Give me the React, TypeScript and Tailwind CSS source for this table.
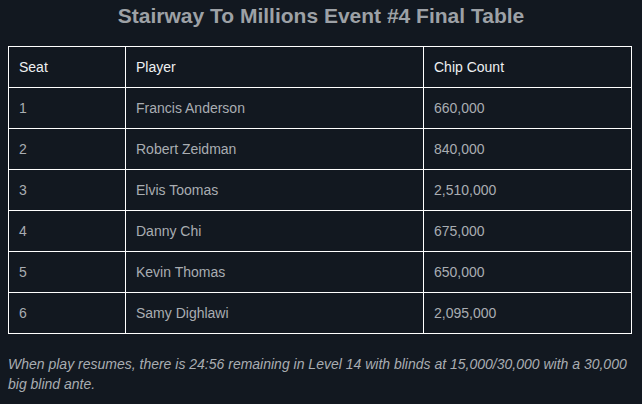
export default function App() {
  const rows = [
    ["1", "Francis Anderson", "660,000"],
    ["2", "Robert Zeidman", "840,000"],
    ["3", "Elvis Toomas", "2,510,000"],
    ["4", "Danny Chi", "675,000"],
    ["5", "Kevin Thomas", "650,000"],
    ["6", "Samy Dighlawi", "2,095,000"],
  ];

  return (
    <div className="min-h-screen w-full bg-[#121820] px-2 font-['Liberation_Sans',Arial,sans-serif]">
      <h1 className="pt-[4px] text-center text-[21px] font-bold leading-[24px] text-[#9da1a6]">
        Stairway To Millions Event #4 Final Table
      </h1>
      <table className="mt-[18px] w-[624px] border-collapse text-[14px] leading-[16px]">
        <thead>
          <tr className="h-[41px]">
            <th className="w-[117px] border border-white px-[10px] text-left font-normal text-[#eef0f2]">Seat</th>
            <th className="w-[298px] border border-white px-[10px] text-left font-normal text-[#eef0f2]">Player</th>
            <th className="border border-white px-[10px] text-left font-normal text-[#eef0f2]">Chip Count</th>
          </tr>
        </thead>
        <tbody>
          {rows.map((r) => (
            <tr key={r[0]} className="h-[41px]">
              <td className="border border-white px-[10px] text-[#a9adb2]">{r[0]}</td>
              <td className="border border-white px-[10px] text-[#a9adb2]">{r[1]}</td>
              <td className="border border-white px-[10px] text-[#a9adb2]">{r[2]}</td>
            </tr>
          ))}
        </tbody>
      </table>
      <p className="mt-[20px] text-[14px] italic leading-[20px] text-[#a9adb2]">
        When play resumes, there is 24:56 remaining in Level 14 with blinds at 15,000/30,000 with a 30,000 big blind ante.
      </p>
    </div>
  );
}
